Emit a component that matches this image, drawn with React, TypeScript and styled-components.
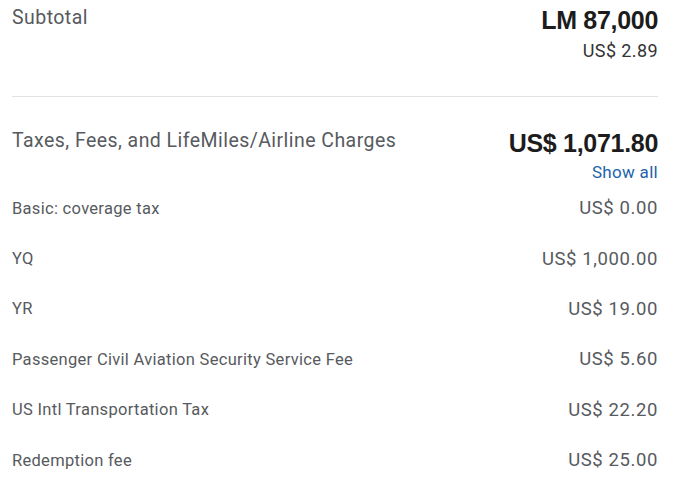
import React from "react";
import styled, { createGlobalStyle } from "styled-components";

interface FeeItem {
  label: string;
  amount: string;
}

const fees: FeeItem[] = [
  { label: "Basic: coverage tax", amount: "US$ 0.00" },
  { label: "YQ", amount: "US$ 1,000.00" },
  { label: "YR", amount: "US$ 19.00" },
  { label: "Passenger Civil Aviation Security Service Fee", amount: "US$ 5.60" },
  { label: "US Intl Transportation Tax", amount: "US$ 22.20" },
  { label: "Redemption fee", amount: "US$ 25.00" },
];

const App: React.FC = () => {
  return (
    <>
      <GlobalStyle />
      <Wrapper>
        <Section>
          <Label>Subtotal</Label>
          <Amounts>
            <BigAmount>LM 87,000</BigAmount>
            <SubAmount>US$ 2.89</SubAmount>
          </Amounts>
        </Section>
        <Divider />
        <Section>
          <Label>Taxes, Fees, and LifeMiles/Airline Charges</Label>
          <Amounts>
            <BigAmount>US$ 1,071.80</BigAmount>
            <ShowAll href="#">Show all</ShowAll>
          </Amounts>
        </Section>
        <FeeList>
          {fees.map((fee) => (
            <FeeRow key={fee.label}>
              <FeeLabel>{fee.label}</FeeLabel>
              <FeeAmount>{fee.amount}</FeeAmount>
            </FeeRow>
          ))}
        </FeeList>
      </Wrapper>
    </>
  );
};

export default App;

const GlobalStyle = createGlobalStyle`
  body {
    margin: 0;
    background: #ffffff;
    font-family: Roboto, "Liberation Sans", sans-serif;
  }
`;

const Wrapper = styled.div`
  width: 646px;
  padding: 2px 32px 0 12px;
`;

const Section = styled.div`
  display: flex;
  justify-content: space-between;
  align-items: flex-start;
`;

const Label = styled.div`
  font-size: 19.5px;
  line-height: 32px;
  letter-spacing: 0.45px;
  color: #575a5e;
`;

const Amounts = styled.div`
  display: flex;
  flex-direction: column;
  align-items: flex-end;
`;

const BigAmount = styled.div`
  font-family: "Liberation Sans", Arial, sans-serif;
  font-weight: 700;
  font-size: 25px;
  line-height: 36px;
  letter-spacing: -0.3px;
  color: #1c1c1c;
`;

const SubAmount = styled.div`
  font-size: 18px;
  line-height: 26px;
  letter-spacing: 0.4px;
  color: #333333;
`;

const Divider = styled.hr`
  border: none;
  border-top: 1px solid #e2e2e2;
  margin: 32px 0 28px;
`;

const ShowAll = styled.a`
  font-size: 17px;
  line-height: 22px;
  letter-spacing: 0.3px;
  color: #2263ab;
  text-decoration: none;
`;

const FeeList = styled.div`
  display: flex;
  flex-direction: column;
`;

const FeeRow = styled.div`
  display: flex;
  justify-content: space-between;
  align-items: center;
  height: 50.4px;
`;

const FeeLabel = styled.span`
  font-size: 16.5px;
  letter-spacing: 0.3px;
  color: #575a5e;
`;

const FeeAmount = styled.span`
  font-size: 18.5px;
  letter-spacing: 0.6px;
  color: #575a5e;
`;
